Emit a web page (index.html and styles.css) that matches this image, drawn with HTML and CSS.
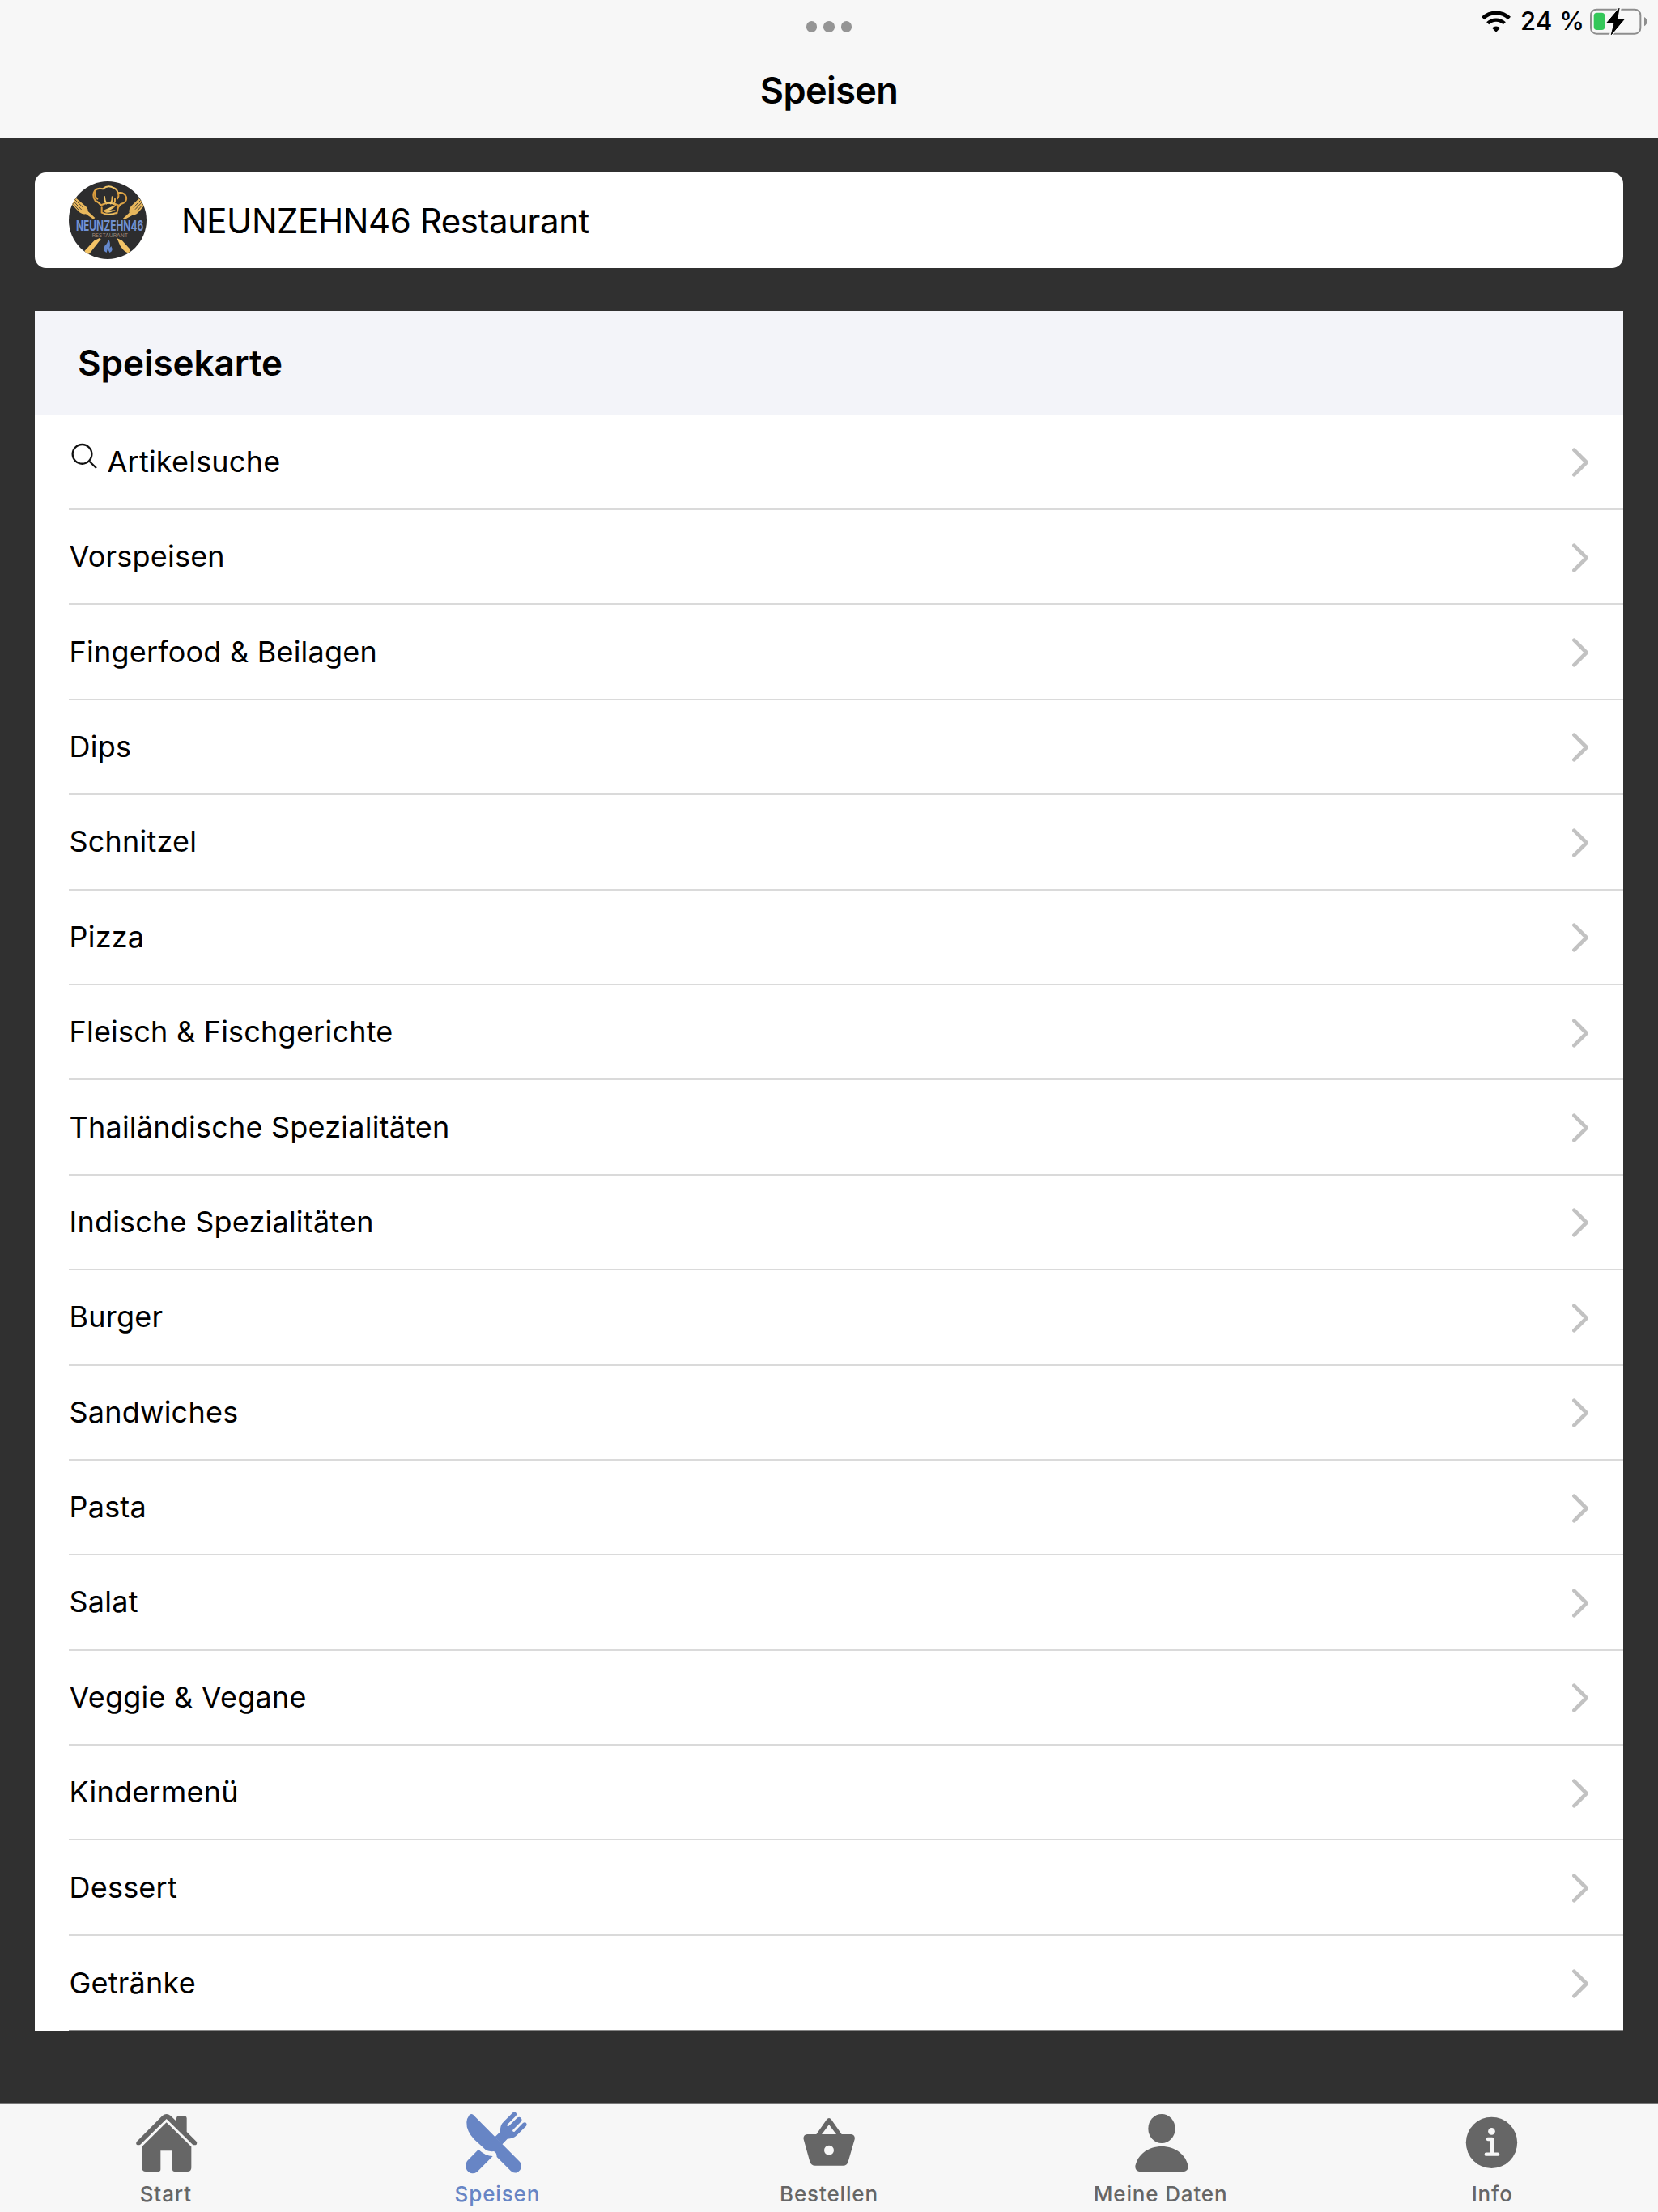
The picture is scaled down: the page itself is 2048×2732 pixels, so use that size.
FILE: index.html
```html
<!DOCTYPE html>
<html lang="de">
<head>
  <meta charset="UTF-8" />
  <meta name="viewport" content="width=device-width, initial-scale=1" />
  <title>Speisen</title>
  <link rel="stylesheet" href="styles.css">
</head>
<body>
  <svg class="sprite">
    <symbol id="chevron" viewBox="0 0 60 108">
      <path d="M7 8 L53 54 L7 100" fill="none" stroke="#c2c2c2" stroke-width="14" stroke-linecap="round" stroke-linejoin="round"/>
    </symbol>
  </svg>

  <header class="topbar">
    <div class="dots"><span></span><span></span><span></span></div>
    <h1>Speisen</h1>
    <div class="status">
      <svg class="wifi" viewBox="0 0 108 80">
        <path d="M5 28 A70 70 0 0 1 103 28" fill="none" stroke="#000" stroke-width="14"/>
        <path d="M23 47 A44 44 0 0 1 85 47" fill="none" stroke="#000" stroke-width="13"/>
        <path d="M54 80 L39 64 A22 22 0 0 1 69 64 Z"/>
      </svg>
      <span>24 %</span>
      <svg class="battery" viewBox="0 0 213 102">
        <rect x="3" y="5" width="184" height="90" rx="21" fill="none" stroke="#8e8e8e" stroke-width="6"/>
        <path d="M201 33 Q213 41 213 50 Q213 59 201 67 Z" fill="#8e8e8e"/>
        <rect x="14" y="17" width="41" height="64" rx="12" fill="#34c759"/>
        <path d="M110 1 L62 56 H89 L78 98 L127 41 H101 Z" stroke="#f7f7f7" stroke-width="12" stroke-linejoin="round" fill="#f7f7f7"/>
        <path d="M108 1 L62 55 H90 L79 98 L127 41 H101 Z" stroke="#000" stroke-width="3" stroke-linejoin="round"/>
      </svg>
    </div>
  </header>

  <main>
    <section class="restaurant">
      <svg class="logo" viewBox="0 0 288 288">
        <defs>
          <linearGradient id="gold" x1="0" x2="1">
            <stop offset="0" stop-color="#d99b3c"/>
            <stop offset="0.5" stop-color="#f3cd73"/>
            <stop offset="1" stop-color="#d8993a"/>
          </linearGradient>
          <clipPath id="round"><circle cx="144" cy="144" r="144"/></clipPath>
        </defs>
        <circle cx="144" cy="144" r="144" fill="#2d2d2e"/>
        <g clip-path="url(#round)">
          <!-- chef's hat -->
          <g fill="none" stroke="url(#gold)" stroke-width="6" stroke-linecap="round">
            <path d="M120 90 Q112 77 98 72 Q85 52 96 35 Q107 22 126 28 Q145 12 166 24 Q181 30 181 43 Q205 38 213 58 Q216 76 199 82 Q190 83 185 94"/>
            <path d="M98 36 Q92 55 106 65 M181 43 Q188 54 180 64 M132 57 Q132 72 139 82 M161 58 Q162 72 155 82 M171 65 Q173 76 167 84"/>
            <path d="M122 87 Q151 72 185 89 Q181 104 178 119 M122 97 V116 Q148 128 176 117"/>
          </g>
          <path d="M125 109 Q150 99 177 84 Q170 101 147 108 L174 105 Q158 117 138 116 Z" fill="url(#gold)"/>
          <!-- forks -->
          <g fill="#e8b75c">
            <path d="M27 62 L60 90 Q72 99 71 111 L97 135 L91 140 L63 121 Q47 124 32 107 L10 84 Z"/>
            <path d="M260 64 L235 88 Q220 100 224 116 L201 137 L206 142 L236 125 Q251 125 261 111 L285 84 Z"/>
          </g>
          <path d="M22 67 L53 97 M18 74 L47 105 M13 80 L41 111 M266 70 L240 97 M272 76 L246 104 M278 82 L252 111" stroke="#2d2d2e" stroke-width="2.5"/>
          <!-- handles -->
          <path d="M114 210 L94 220 L58 258 L66 270 Q74 272 80 263 L119 214 Z" fill="#f3c366"/>
          <path d="M178 210 L198 220 L228 253 Q228 266 216 264 Q202 258 190 238 Z" fill="#f3c366"/>
          <path d="M146 214 Q145 229 134 238 Q123 256 140 264 L144 249 L151 264 Q167 258 157 240 L151 248 Q157 228 146 214 Z" fill="#6488cd"/>
        </g>
        <text class="logo-name" x="27" y="184" textLength="250" lengthAdjust="spacingAndGlyphs">NEUNZEHN46</text>
        <text class="logo-sub" x="86" y="207" textLength="133">RESTAURANT</text>
      </svg>
      <span>NEUNZEHN46 Restaurant</span>
    </section>

    <section class="menu">
      <h2>Speisekarte</h2>
      <ul>
        <li>
          <svg class="search" viewBox="0 0 100 100"><circle cx="41" cy="42" r="36"/><path d="M68 69 L94 94"/></svg>
          <span>Artikelsuche</span><svg class="chevron"><use href="#chevron"/></svg>
        </li>
        <li><span>Vorspeisen</span><svg class="chevron"><use href="#chevron"/></svg></li>
        <li><span>Fingerfood &amp; Beilagen</span><svg class="chevron"><use href="#chevron"/></svg></li>
        <li><span>Dips</span><svg class="chevron"><use href="#chevron"/></svg></li>
        <li><span>Schnitzel</span><svg class="chevron"><use href="#chevron"/></svg></li>
        <li><span>Pizza</span><svg class="chevron"><use href="#chevron"/></svg></li>
        <li><span>Fleisch &amp; Fischgerichte</span><svg class="chevron"><use href="#chevron"/></svg></li>
        <li><span>Thailändische Spezialitäten</span><svg class="chevron"><use href="#chevron"/></svg></li>
        <li><span>Indische Spezialitäten</span><svg class="chevron"><use href="#chevron"/></svg></li>
        <li><span>Burger</span><svg class="chevron"><use href="#chevron"/></svg></li>
        <li><span>Sandwiches</span><svg class="chevron"><use href="#chevron"/></svg></li>
        <li><span>Pasta</span><svg class="chevron"><use href="#chevron"/></svg></li>
        <li><span>Salat</span><svg class="chevron"><use href="#chevron"/></svg></li>
        <li><span>Veggie &amp; Vegane</span><svg class="chevron"><use href="#chevron"/></svg></li>
        <li><span>Kindermenü</span><svg class="chevron"><use href="#chevron"/></svg></li>
        <li><span>Dessert</span><svg class="chevron"><use href="#chevron"/></svg></li>
        <li><span>Getränke</span><svg class="chevron"><use href="#chevron"/></svg></li>
      </ul>
    </section>
  </main>

  <nav class="tabbar">
    <a class="tab">
      <svg viewBox="50 30 288 270">
        <path d="M86 165 L181 69 Q196 57 211 69 L233 90 V78 Q233 71 240 71 H264 Q271 71 271 78 V129 L307 165 Q311 170 307 176 Q301 180 293 176 L196 81 L99 176 Q92 180 85 176 Q81 171 86 165 Z"/>
        <path d="M196 94 L288 184 V262 Q288 276 274 276 H226 Q218 276 218 268 V199 H174 V268 Q174 276 166 276 H119 Q105 276 105 262 V184 Z"/>
      </svg>
      <span>Start</span>
    </a>
    <a class="tab active">
      <svg viewBox="79 30 288 270">
        <path d="M154 194 L112 237 Q101 254 111 271 Q126 290 148 278 L207 219 Q180 219 154 194 Z"/>
        <path d="M215 148 L235 128 Q233 105 248 91 L282 57 Q289 53 294 59 Q298 64 293 70 L260 103 Q259 109 265 109 L299 76 Q306 72 312 78 Q317 84 313 90 L280 123 Q280 130 287 129 L319 96 Q326 91 331 96 Q335 101 331 107 L296 142 Q282 155 261 155 L241 176 Z"/>
        <path d="M134 65 Q127 60 120 67 Q101 92 117 127 Q124 142 138 157 L180 195 Q190 203 211 201 Q222 205 222 222 L273 273 Q285 285 300 278 Q321 265 308 241 Z"/>
      </svg>
      <span>Speisen</span>
    </a>
    <a class="tab">
      <svg viewBox="108 30 288 270">
        <path fill-rule="evenodd" d="M171 138 H205 L243 84 Q252 72 261 84 L299 138 H334 Q350 141 347 157 L323 239 Q319 254 304 254 H201 Q186 254 181 239 L158 157 Q155 141 171 138 Z M225 138 H279 L252 102 Z M252 179 A18 18 0 1 0 252 215 A18 18 0 1 0 252 179 Z"/>
      </svg>
      <span>Bestellen</span>
    </a>
    <a class="tab">
      <svg viewBox="167 30 288 270">
        <ellipse cx="314" cy="117" rx="50" ry="54"/>
        <path d="M232 277 Q215 273 216 255 C226 213 263 183 314 183 C365 183 402 213 412 255 Q413 273 396 277 Z"/>
      </svg>
      <span>Meine Daten</span>
    </a>
    <a class="tab">
      <svg viewBox="45.6 30 288 270">
        <circle cx="188" cy="169" r="95"/>
        <circle cx="188" cy="127" r="13" fill="#f7f7f7"/>
        <path d="M174 156 H190 V212 M168 212 H211" fill="none" stroke="#f7f7f7" stroke-width="13" stroke-linecap="round" stroke-linejoin="round"/>
      </svg>
      <span>Info</span>
    </a>
  </nav>
</body>
</html>
```

FILE: styles.css
```css
* {
  box-sizing: border-box;
  margin: 0;
  padding: 0;
}

body {
  display: flex;
  flex-direction: column;
  height: 2732px;
  background-color: #303030;
  color: #000;
  font-family: Inter, "Liberation Sans", sans-serif;
}

svg {
  display: block;
  flex: none;
}

.sprite {
  position: absolute;
  width: 0;
  height: 0;
}

/* top bar */
.topbar {
  position: relative;
  display: flex;
  flex-direction: column;
  align-items: center;
  height: 171px;
  padding-top: 26px;
  background-color: #f7f7f7;
  border-bottom: 1px solid #8a8a8a;
}

.dots {
  display: flex;
  gap: 8px;
}

.dots span {
  width: 13.5px;
  height: 13.5px;
  border-radius: 50%;
  background-color: #959595;
}

.topbar h1 {
  margin-top: 44px;
  font-size: 45px;
  line-height: 56px;
  font-weight: 600;
  letter-spacing: -0.6px;
}

.status {
  position: absolute;
  top: 0;
  right: 13px;
  display: flex;
  align-items: center;
  height: 53px;
  font-size: 31px;
  font-weight: 500;
}

.status span {
  width: 86px;
  padding-left: 12px;
  letter-spacing: 0.3px;
  line-height: 51px;
  height: 53px;
  white-space: nowrap;
}

.wifi {
  width: 36px;
  height: 27px;
}

.battery {
  width: 71px;
  height: 34px;
  margin-left: 12px;
}

/* content */
main {
  flex: 1;
  padding: 42px 43px 0;
}

.restaurant {
  display: flex;
  align-items: center;
  height: 118px;
  padding-left: 42px;
  background-color: #fff;
  border-radius: 14px;
  font-size: 42px;
}

.restaurant span {
  margin: 1px 0 0 43px;
  letter-spacing: -0.42px;
}

.logo {
  width: 96px;
  height: 96px;
  overflow: visible;
}

.logo-name {
  fill: #7191d3;
  font-size: 50px;
  font-weight: 700;
}

.logo-sub {
  fill: #a18d7f;
  font-size: 20px;
}

.menu {
  margin-top: 53px;
  background-color: #fff;
}

.menu h2 {
  height: 128px;
  padding-left: 53px;
  background-color: #f3f4f9;
  font-size: 44px;
  line-height: 128px;
  font-weight: 600;
  letter-spacing: -0.05px;
}

.menu ul {
  list-style: none;
}

.menu li {
  display: flex;
  align-items: center;
  height: 117.4px;
  margin-left: 42px;
  padding: 2px 43px 0 0;
  border-bottom: 2px solid #dadada;
  font-size: 36px;
  letter-spacing: 0.22px;
}

.menu li:first-child {
  height: 118px;
}

.menu li:last-child {
  border-bottom: 1px solid #858585;
}

.menu li span {
  margin-left: 0.5px;
  padding-bottom: 3px;
}

.search {
  width: 33px;
  height: 33px;
  margin: -16px 11px 0 3px;
  fill: none;
  stroke: #111;
  stroke-width: 7;
}

.chevron {
  width: 20px;
  height: 36px;
  margin-left: auto;
}

/* tab bar */
.tabbar {
  display: grid;
  grid-template-columns: repeat(5, 1fr);
  height: 135px;
  background-color: #f7f7f7;
  border-top: 1px solid #777;
}

.tab {
  display: flex;
  flex-direction: column;
  align-items: center;
  padding-top: 2px;
  color: #666;
  fill: #666;
  font-size: 26px;
  font-weight: 450;
  letter-spacing: 0.85px;
}

.tab svg {
  width: 96px;
  height: 90px;
}

.tab span {
  margin-top: 4px;
  line-height: 32px;
}

.active {
  color: #6785c5;
  fill: #6785c5;
}
```
